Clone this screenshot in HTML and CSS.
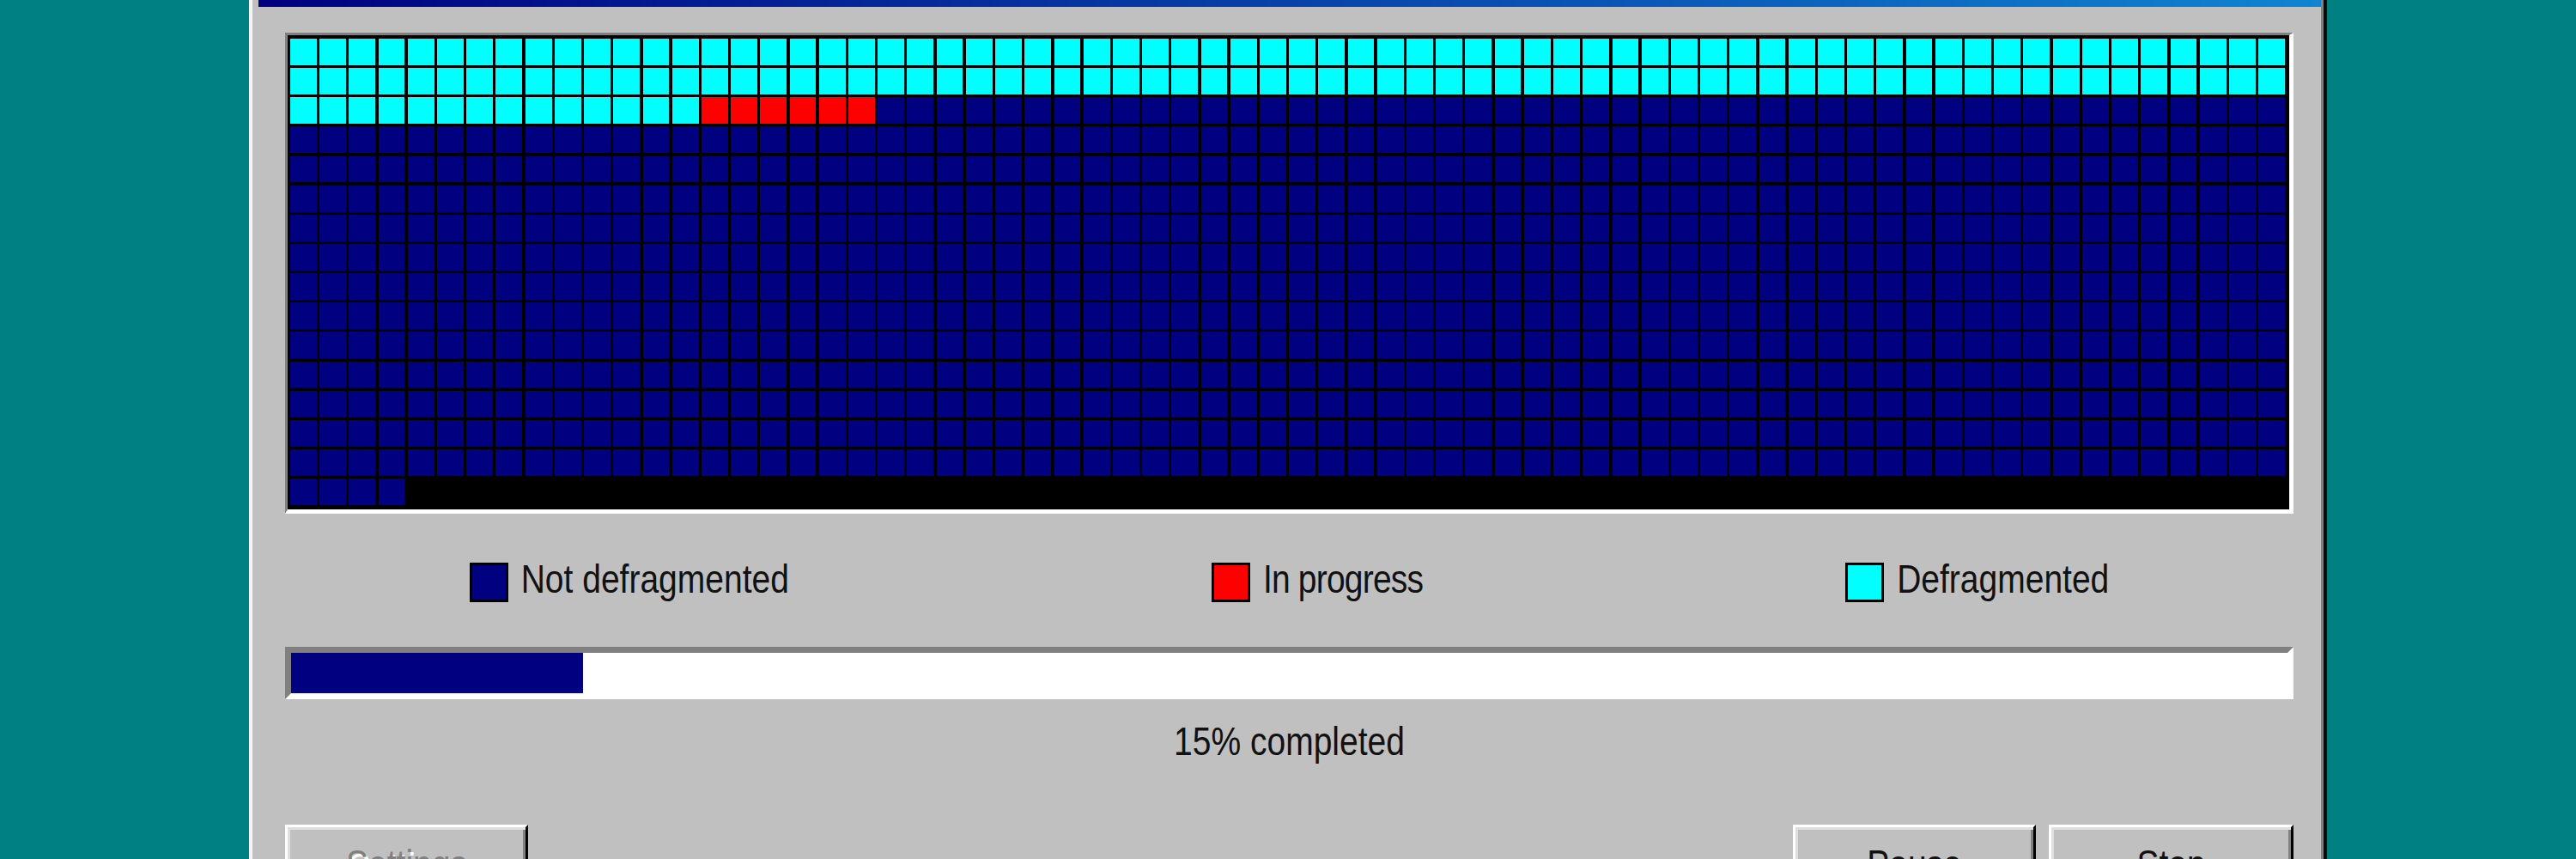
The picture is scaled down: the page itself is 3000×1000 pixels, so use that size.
FILE: index.html
```html
<!DOCTYPE html>
<html lang="en">
<head>
<meta charset="utf-8">
<title>Defragmenting Drive C</title>
<link rel="stylesheet" href="styles.css">
</head>
<body>
<div class="window">
  <div class="titlebar"></div>
  <div class="content">
    <div class="map-frame">
      <div class="map" id="map" data-runs="d:150,p:6,n:868"></div>
    </div>
    <div class="legend">
      <div class="legend-item"><span class="swatch swatch-not"></span><span class="label">Not defragmented</span></div>
      <div class="legend-item"><span class="swatch swatch-progress"></span><span class="label label-tight">In progress</span></div>
      <div class="legend-item"><span class="swatch swatch-done"></span><span class="label">Defragmented</span></div>
    </div>
    <div class="progress"><div class="progress-fill" style="width:340px"></div></div>
    <div class="status"><span class="label">15% completed</span></div>
    <div class="buttons">
      <button class="btn btn-disabled" type="button" disabled><span class="label">Settings</span></button>
      <div class="spacer"></div>
      <button class="btn" type="button"><span class="label">Pause</span></button>
      <button class="btn btn-wide" type="button"><span class="label">Stop</span></button>
    </div>
  </div>
</div>
<script src="script.js"></script>
</body>
</html>
```

FILE: styles.css
```css
html, body {
  margin: 0;
  padding: 0;
  height: 1000px;
  overflow: hidden;
}

body {
  background: #008080;
  font-family: "Liberation Sans", Arial, sans-serif;
  color: #111;
}

.window {
  width: 2420px;
  height: 1100px;
  margin-left: 290px;
  box-sizing: border-box;
  background: #c0c0c0;
  border-left: 4px solid #f4f4f4;
  border-right: 4px solid #0a0a0a;
  box-shadow: inset -3px 0 0 #808080;
  padding: 0 3px 0 7px;
}

.titlebar {
  height: 8px;
  background: linear-gradient(to right, #000080, #1084d0);
}

.content {
  margin: 0 32px 0 31px;
}

.map-frame {
  margin-top: 30px;
  border-style: solid;
  border-width: 3px 5px 5px 3px;
  border-color: #808080 #ffffff #ffffff #808080;
  background: #000;
  padding: 4px 5px 5px 3px;
}

.map {
  display: grid;
  grid-template-columns: repeat(68, 1fr);
  grid-template-rows: repeat(16, 1fr);
  gap: 3.4px;
  height: 543px;
}

.cell-d { background: #00ffff; }
.cell-p { background: #ff0000; }
.cell-n { background: #000080; }

.legend {
  margin-top: 57px;
  height: 46px;
  display: flex;
  justify-content: center;
  align-items: center;
  gap: 492px;
}

.legend-item {
  display: flex;
  align-items: center;
}

.swatch {
  width: 45px;
  height: 46px;
  box-sizing: border-box;
  border: 3px solid #000;
  margin-right: 15px;
}

.swatch-not { background: #000080; }
.swatch-progress { background: #ff0000; }
.swatch-done { background: #00ffff; }

.label {
  display: inline-block;
  font-size: 39px;
  line-height: 46px;
  transform: scaleY(1.18);
  white-space: nowrap;
}

.label-tight {
  letter-spacing: -0.8px;
}

.legend-item .label {
  margin-bottom: 6px;
}

.progress {
  margin-top: 52px;
  height: 61px;
  box-sizing: border-box;
  border: 7px solid;
  border-color: #808080 #ffffff #ffffff #808080;
  background: #fff;
}

.progress-fill {
  height: 100%;
  background: #000080;
}

.status {
  margin-top: 27px;
  height: 46px;
  text-align: center;
}

.buttons {
  margin-top: 73px;
  display: flex;
  gap: 15px;
}

.spacer {
  flex: 1;
}

.btn {
  width: 283px;
  height: 80px;
  box-sizing: border-box;
  margin: 0;
  padding: 13px 0 0;
  border: 3px solid;
  border-color: #ffffff #000000 #000000 #ffffff;
  box-shadow: inset 3px 3px 0 #dfdfdf, inset -3px -3px 0 #808080;
  background: #c0c0c0;
  font-family: "Liberation Sans", Arial, sans-serif;
  color: #111;
  text-align: center;
  vertical-align: top;
  display: block;
}

.btn-wide {
  width: 285px;
}

.btn-disabled {
  color: #808080;
  text-shadow: 3px 3px 0 #ffffff;
}
```

FILE: script.js
```js
(function () {
  var map = document.getElementById('map');
  var runs = map.getAttribute('data-runs').split(',');
  var frag = document.createDocumentFragment();
  runs.forEach(function (run) {
    var parts = run.split(':');
    var kind = parts[0];
    var count = parseInt(parts[1], 10);
    for (var i = 0; i < count; i++) {
      var cell = document.createElement('div');
      cell.className = 'cell-' + kind;
      frag.appendChild(cell);
    }
  });
  map.appendChild(frag);
})();
```
